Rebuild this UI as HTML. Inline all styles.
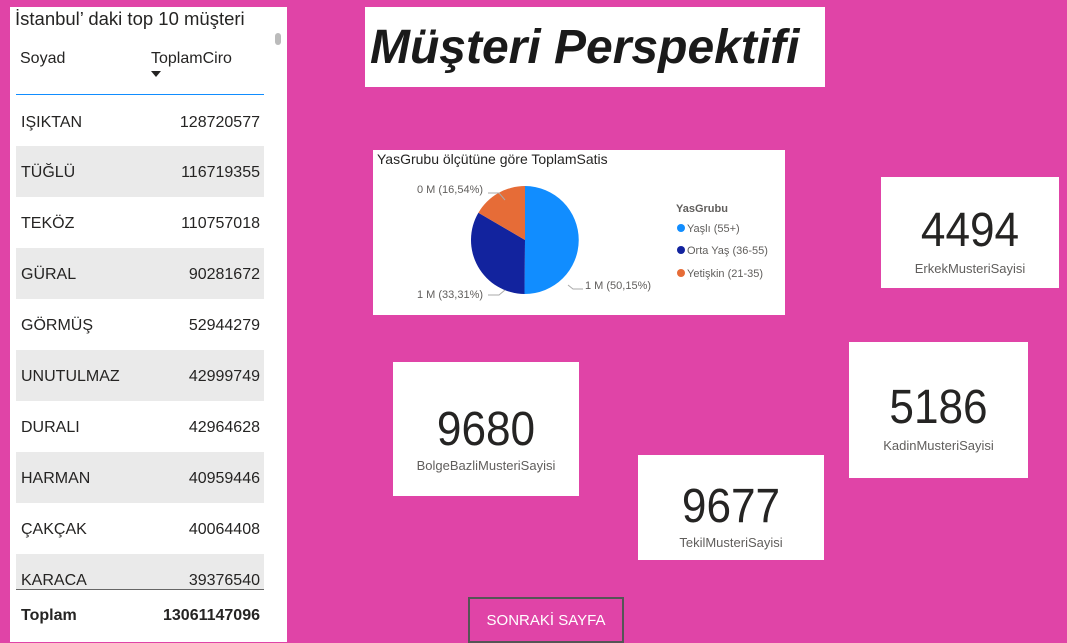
<!DOCTYPE html>
<html><head><meta charset="utf-8"><style>
body{margin:0;width:1067px;height:642px;background:#e044a7;position:relative;overflow:hidden;font-family:"Liberation Sans",sans-serif;}
.box{position:absolute;background:#fff;}
.t{position:absolute;white-space:nowrap;}
.row{position:absolute;left:16px;width:248px;height:51px;font-size:16px;color:#252423;}
.row span{position:absolute;top:18px;}
.row .n{right:4px;}
.row .s{left:5px;}
.card .big{position:absolute;width:100%;text-align:center;font-size:48px;color:#252423;transform:scaleX(0.92);}
.card .lab{position:absolute;width:100%;text-align:center;font-size:13px;color:#605e5c;}
</style></head><body>
<div class="box" style="left:10px;top:7px;width:277px;height:635px;">
<div class="t" style="left:5px;top:1px;font-size:18.5px;color:#252423;">İstanbul’ daki top 10 müşteri</div>
<div style="position:absolute;left:265px;top:26px;width:6px;height:12px;background:#bbb;border-radius:3px"></div>
<div class="t" style="left:10px;top:43px;font-size:16px;color:#252423;">Soyad</div>
<div class="t" style="left:141px;top:43px;font-size:16px;color:#252423;">ToplamCiro</div>
<div style="position:absolute;left:141px;top:64px;width:0;height:0;border-left:5px solid transparent;border-right:5px solid transparent;border-top:6px solid #252423"></div>
<div style="position:absolute;left:6px;top:87px;width:248px;height:1px;background:#118dff"></div>
</div>
<div class="row" style="top:96px;"><span class="s">IŞIKTAN</span><span class="n">128720577</span></div>
<div class="row" style="top:146px;background:#eaeaea"><span class="s">TÜĞLÜ</span><span class="n">116719355</span></div>
<div class="row" style="top:197px;"><span class="s">TEKÖZ</span><span class="n">110757018</span></div>
<div class="row" style="top:248px;background:#eaeaea"><span class="s">GÜRAL</span><span class="n">90281672</span></div>
<div class="row" style="top:299px;"><span class="s">GÖRMÜŞ</span><span class="n">52944279</span></div>
<div class="row" style="top:350px;background:#eaeaea"><span class="s">UNUTULMAZ</span><span class="n">42999749</span></div>
<div class="row" style="top:401px;"><span class="s">DURALI</span><span class="n">42964628</span></div>
<div class="row" style="top:452px;background:#eaeaea"><span class="s">HARMAN</span><span class="n">40959446</span></div>
<div class="row" style="top:503px;"><span class="s">ÇAKÇAK</span><span class="n">40064408</span></div>
<div class="row" style="top:554px;height:35px;background:#eaeaea"><span class="s">KARACA</span><span class="n">39376540</span></div>
<div style="position:absolute;left:16px;top:589px;width:248px;height:1px;background:#666"></div>
<div class="t" style="left:21px;top:607px;font-size:16px;font-weight:bold;color:#252423">Toplam</div>
<div class="t" style="right:807px;top:607px;font-size:16px;font-weight:bold;color:#252423">13061147096</div>

<div class="box" style="left:365px;top:7px;width:460px;height:80px;">
<div class="t" style="left:5px;top:13px;font-size:48px;font-weight:bold;font-style:italic;color:#1a1a1a;">Müşteri Perspektifi</div>
</div>

<div class="box" style="left:373px;top:150px;width:412px;height:165px;">
<div class="t" style="left:4px;top:1px;font-size:14px;color:#252423">YasGrubu ölçütüne göre ToplamSatis</div>
<svg width="412" height="165" style="position:absolute;left:0;top:0">
<path d="M152 90 L152 36 A54 54 0 0 1 151.5 144 Z" fill="#118dff"/>
<path d="M152 90 L151.5 144 A54 54 0 0 1 105.4 62.7 Z" fill="#12239e"/>
<path d="M152 90 L105.4 62.7 A54 54 0 0 1 152 36 Z" fill="#e66c37"/>
<polyline points="115,43 126,43 132,50" fill="none" stroke="#aaa"/>
<polyline points="115,145 126,145 132,140" fill="none" stroke="#aaa"/>
<polyline points="195,135 200,139 210,139" fill="none" stroke="#aaa"/>
<text x="44" y="43" font-size="11" fill="#605e5c" font-family="Liberation Sans">0 M (16,54%)</text>
<text x="44" y="148" font-size="11" fill="#605e5c" font-family="Liberation Sans">1 M (33,31%)</text>
<text x="212" y="139" font-size="11" fill="#605e5c" font-family="Liberation Sans">1 M (50,15%)</text>
<text x="303" y="62" font-size="11" font-weight="bold" fill="#605e5c" font-family="Liberation Sans">YasGrubu</text>
<circle cx="308" cy="78" r="4" fill="#118dff"/><text x="314" y="82" font-size="11" fill="#605e5c" font-family="Liberation Sans">Yaşlı (55+)</text>
<circle cx="308" cy="100" r="4" fill="#12239e"/><text x="314" y="104" font-size="11" fill="#605e5c" font-family="Liberation Sans">Orta Yaş (36-55)</text>
<circle cx="308" cy="123" r="4" fill="#e66c37"/><text x="314" y="127" font-size="11" fill="#605e5c" font-family="Liberation Sans">Yetişkin (21-35)</text>
</svg>
</div>

<div class="box card" style="left:881px;top:177px;width:178px;height:111px;"><div class="big" style="top:26px">4494</div><div class="lab" style="top:84px">ErkekMusteriSayisi</div></div>
<div class="box card" style="left:849px;top:342px;width:179px;height:136px;"><div class="big" style="top:38px">5186</div><div class="lab" style="top:96px">KadinMusteriSayisi</div></div>
<div class="box card" style="left:393px;top:362px;width:186px;height:134px;"><div class="big" style="top:40px">9680</div><div class="lab" style="top:96px">BolgeBazliMusteriSayisi</div></div>
<div class="box card" style="left:638px;top:455px;width:186px;height:105px;"><div class="big" style="top:24px">9677</div><div class="lab" style="top:80px">TekilMusteriSayisi</div></div>

<div style="position:absolute;left:468px;top:597px;width:152px;height:42px;border:2px solid #555;color:#fff;font-size:15px;text-align:center;line-height:44px;">SONRAKİ SAYFA</div>
</body></html>
